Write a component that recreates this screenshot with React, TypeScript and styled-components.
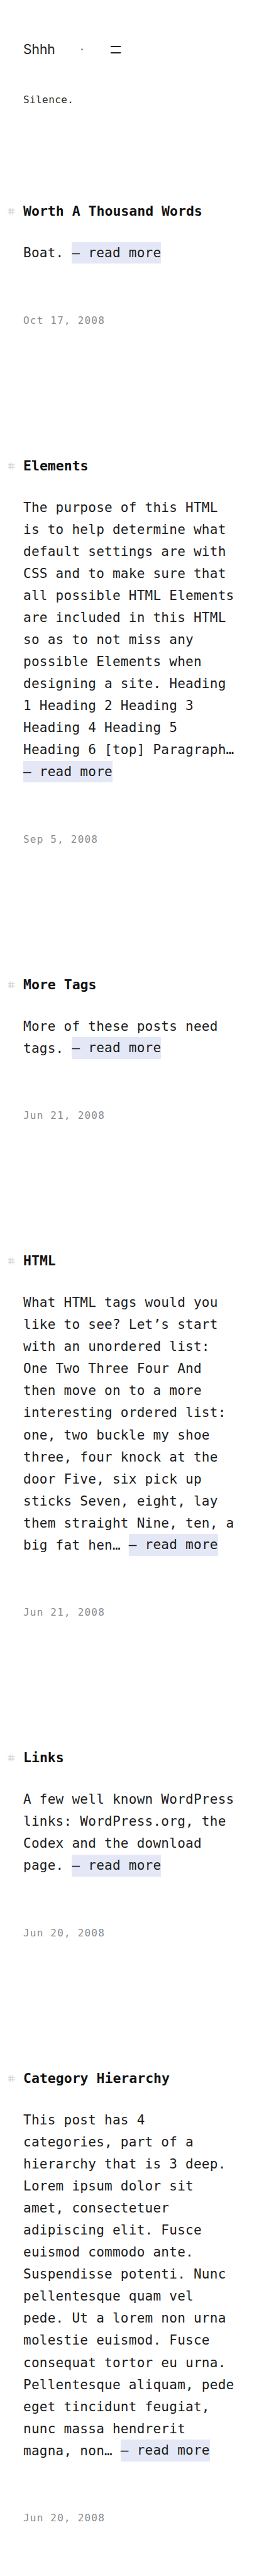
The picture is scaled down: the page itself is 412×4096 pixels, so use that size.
import styled, { createGlobalStyle } from "styled-components";

const GlobalStyle = createGlobalStyle`
  html, body {
    margin: 0;
    padding: 0;
    background: #fff;
  }
  body {
    font-family: "DejaVu Sans Mono", "Liberation Mono", monospace;
    color: #1b1b1b;
  }
`;

interface Post {
  title: string;
  excerpt: string;
  date: string;
}

const POSTS: Post[] = [
  {
    title: "Worth A Thousand Words",
    excerpt: "Boat.",
    date: "Oct 17, 2008",
  },
  {
    title: "Elements",
    excerpt:
      "The purpose of this HTML is to help determine what default settings are with CSS and to make sure that all possible HTML Elements are included in this HTML so as to not miss any possible Elements when designing a site. Heading 1 Heading 2 Heading 3 Heading 4 Heading 5 Heading 6 [top] Paragraph…",
    date: "Sep 5, 2008",
  },
  {
    title: "More Tags",
    excerpt: "More of these posts need tags.",
    date: "Jun 21, 2008",
  },
  {
    title: "HTML",
    excerpt:
      "What HTML tags would you like to see? Let’s start with an unordered list: One Two Three Four And then move on to a more interesting ordered list: one, two buckle my shoe three, four knock at the door Five, six pick up sticks Seven, eight, lay them straight Nine, ten, a big fat hen…",
    date: "Jun 21, 2008",
  },
  {
    title: "Links",
    excerpt:
      "A few well known WordPress links: WordPress.org, the Codex and the download page.",
    date: "Jun 20, 2008",
  },
  {
    title: "Category Hierarchy",
    excerpt:
      "This post has 4 categories, part of a hierarchy that is 3 deep. Lorem ipsum dolor sit amet, consectetuer adipiscing elit. Fusce euismod commodo ante. Suspendisse potenti. Nunc pellentesque quam vel pede. Ut a lorem non urna molestie euismod. Fusce consequat tortor eu urna. Pellentesque aliquam, pede eget tincidunt feugiat, nunc massa hendrerit magna, non…",
    date: "Jun 20, 2008",
  },
];

const HashMark = () => (
  <svg width="12" height="12" viewBox="0 0 12 12" fill="none">
    <path
      d="M4 0.5v11M8.5 0.5v11M0.5 4h11M0.5 8h11"
      stroke="#c4c4c4"
      strokeWidth="1"
    />
  </svg>
);

const App = () => (
  <Page>
    <GlobalStyle />
    <Header>
      <Brand>Shhh</Brand>
      <Dot />
      <Menu aria-label="menu">
        <MenuLine />
        <MenuLine />
      </Menu>
    </Header>
    <Tagline>Silence.</Tagline>
    <Feed>
      {POSTS.map((p) => (
        <Article key={p.title}>
          <Title>
            <HashMark />
            <span>{p.title}</span>
          </Title>
          <Excerpt>
            {p.excerpt} <ReadMore href="#">— read more</ReadMore>
          </Excerpt>
          <PostDate>{p.date}</PostDate>
        </Article>
      ))}
    </Feed>
  </Page>
);

const Page = styled.div`
  padding: 58px 37px 60px;
`;

const Header = styled.header`
  display: flex;
  align-items: center;
  height: 40px;
`;

const Brand = styled.div`
  font-family: Inter, "Noto Sans", sans-serif;
  font-size: 21px;
  color: #222;
  margin-right: 41px;
`;

const Dot = styled.span`
  width: 3px;
  height: 3px;
  border-radius: 50%;
  background: #8c8c8c;
  margin-right: 44px;
`;

const Menu = styled.div`
  display: flex;
  flex-direction: column;
  gap: 8.5px;
  width: 16px;
  padding-top: 2px;
`;

const MenuLine = styled.span`
  display: block;
  height: 1.5px;
  background: #222;
`;

const Tagline = styled.p`
  margin: 49px 0 0;
  font-size: 16px;
  line-height: 24px;
  letter-spacing: 0.4px;
  color: #2a2a2a;
`;

const Feed = styled.main`
  display: flex;
  flex-direction: column;
  gap: 205px;
  margin-top: 151px;
`;

const Article = styled.article`
  display: flex;
  flex-direction: column;
`;

const Title = styled.h2`
  display: flex;
  align-items: center;
  gap: 13px;
  margin: 0 0 0 -25px;
  font-size: 21.5px;
  line-height: 28px;
  font-weight: 700;
  color: #111;
`;

const Excerpt = styled.p`
  margin: 35px 0 0;
  font-size: 21px;
  line-height: 35.05px;
  letter-spacing: 0.26px;
  color: #1b1b1b;
`;

/* inline so the tint spans the line box without growing it */
const ReadMore = styled.a`
  padding: 5.3px 0;
  white-space: nowrap;
  background: #e4e8f6;
  color: inherit;
  text-decoration: none;
`;

const PostDate = styled.time`
  display: block;
  margin-top: 77.5px;
  font-size: 16px;
  line-height: 24px;
  letter-spacing: 1.2px;
  color: #8a8a8a;
`;

export default App;
